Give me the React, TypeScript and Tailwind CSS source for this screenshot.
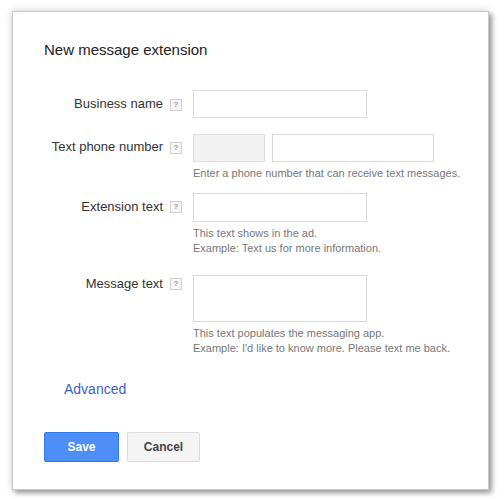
import React from 'react';

const font = { fontFamily: '"Liberation Sans", Arial, sans-serif' };

const Help = () => (
  <span className="mt-[1px] flex h-[12px] w-[12px] shrink-0 items-center justify-center border border-[#d2d2d2] bg-[#f6f6f6] text-[8px] font-bold leading-none text-[#999]">
    ?
  </span>
);

const Field = ({
  label,
  labelTop,
  children,
  hints = [],
}: {
  label: string;
  labelTop: string;
  children: React.ReactNode;
  hints?: string[];
}) => (
  <div className="flex items-start">
    <div className={`flex w-[138px] shrink-0 items-center justify-end gap-[7px] ${labelTop}`}>
      <span className="text-[13px] leading-[16px] text-[#333]">{label}</span>
      <Help />
    </div>
    <div className="ml-[11px] flex flex-col">
      {children}
      {hints.length > 0 && (
        <div className="mt-[4px] flex flex-col">
          {hints.map((h) => (
            <span key={h} className="text-[11px] leading-[15.5px] text-[#777]">
              {h}
            </span>
          ))}
        </div>
      )}
    </div>
  </div>
);

export default function App() {
  return (
    <div className="min-h-[499px] bg-white pl-[12px] pt-[11px]" style={font}>
      <div className="flex w-[477px] flex-col border border-[#c9c9c9] bg-white pb-[27px] pl-[31px] pt-[28px] shadow-[3px_3px_5px_rgba(0,0,0,0.35),0_0_8px_rgba(0,0,0,0.18)]">
        <h1 className="text-[15px] leading-[20px] text-[#222]">New message extension</h1>

        <div className="mt-[30px] flex flex-col">
          <Field label="Business name" labelTop="pt-[6px]">
            <div className="h-[28px] w-[174px] border border-[#d9d9d9] bg-white" />
          </Field>

          <div className="mt-[16px]">
            <Field
              label="Text phone number"
              labelTop="pt-[5px]"
              hints={['Enter a phone number that can receive text messages.']}
            >
              <div className="flex gap-[7px]">
                <div className="h-[28px] w-[72px] border border-[#e0e0e0] bg-[#f1f1f1]" />
                <div className="h-[28px] w-[162px] border border-[#d9d9d9] bg-white" />
              </div>
            </Field>
          </div>

          <div className="mt-[11px]">
            <Field
              label="Extension text"
              labelTop="pt-[6px]"
              hints={['This text shows in the ad.', 'Example: Text us for more information.']}
            >
              <div className="h-[29px] w-[174px] border border-[#d9d9d9] bg-white" />
            </Field>
          </div>

          <div className="mt-[18px]">
            <Field
              label="Message text"
              labelTop="pt-[1px]"
              hints={[
                'This text populates the messaging app.',
                "Example: I'd like to know more. Please text me back.",
              ]}
            >
              <div className="h-[47px] w-[174px] border border-[#d9d9d9] bg-white" />
            </Field>
          </div>
        </div>

        <a className="ml-[20px] mt-[23px] text-[14px] leading-[18px] text-[#3b5fcd]">Advanced</a>

        <div className="mt-[34px] flex gap-[8px]">
          <button className="h-[30px] w-[75px] rounded-[2px] border border-[#3079ed] bg-[#4d8ff7] text-[12px] font-bold text-white">
            Save
          </button>
          <button className="h-[30px] w-[73px] rounded-[2px] border border-[#dcdcdc] bg-[#f4f4f4] text-[12px] font-bold text-[#444]">
            Cancel
          </button>
        </div>
      </div>
    </div>
  );
}
